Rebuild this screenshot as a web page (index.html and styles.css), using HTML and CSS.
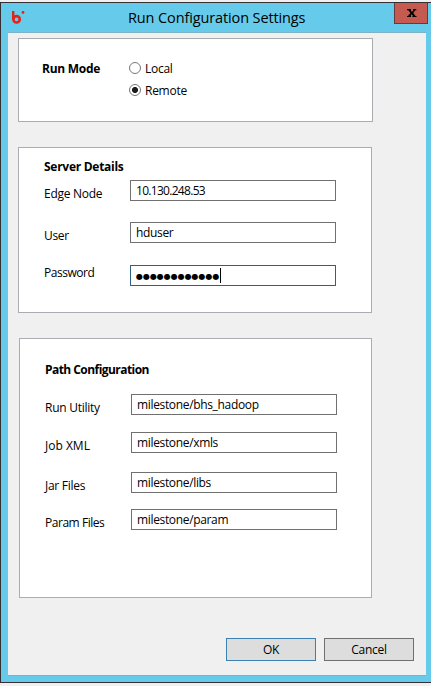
FILE: index.html
```html
<!DOCTYPE html>
<html lang="en">
<head>
<meta charset="utf-8">
<title>Run Configuration Settings</title>
<link rel="stylesheet" href="styles.css">
</head>
<body>
<div class="window">
  <header class="titlebar">
    <svg class="logo" width="14" height="14" viewBox="0 0 14 14">
      <path d="M2.2 1V9.5" fill="none" stroke="#e0251b" stroke-width="2.4"/>
      <circle cx="5.6" cy="9.3" r="3.2" fill="none" stroke="#e0251b" stroke-width="2.6"/>
      <circle cx="12" cy="2.4" r="1.4" fill="#e0251b"/>
    </svg>
    <h1 class="title">Run Configuration Settings</h1>
    <button class="close" aria-label="Close">
      <svg width="10" height="9" viewBox="0 0 10 9"><path d="M0 0H4V1.2H3.7L5 3L6.4 1.2H6V0H9.3V1.2H8.3L6.2 4L8.5 6.9H9.5V8.1H5.4V6.9H6L4.8 5.3L3.5 6.9H4V8.1H0V6.9H1L3.5 4L1.3 1.2H0Z" fill="#000"/></svg>
    </button>
  </header>
  <main class="content">
    <section class="panel mode">
      <h2 class="slight">Run Mode</h2>
      <div class="radios">
        <label class="radio"><i class="dot"></i><span class="slight">Local</span></label>
        <label class="radio"><i class="dot checked"></i><span class="slight">Remote</span></label>
      </div>
    </section>
    <section class="panel server">
      <h2 class="slight">Server Details</h2>
      <div class="row"><span class="label slight">Edge Node</span><div class="field tightest">10.130.248.53</div></div>
      <div class="row user"><span class="label snug">User</span><div class="field snug">hduser</div></div>
      <div class="row password"><span class="label tight">Password</span><div class="field focused"><span class="bullets">●●●●●●●●●●●●</span><i class="caret"></i></div></div>
    </section>
    <section class="panel paths">
      <h2 class="tighter">Path Configuration</h2>
      <div class="row"><span class="label slight">Run Utility</span><div class="field snug">milestone/bhs_hadoop</div></div>
      <div class="row job"><span class="label">Job XML</span><div class="field snug">milestone/xmls</div></div>
      <div class="row jar"><span class="label slight">Jar Files</span><div class="field snug">milestone/libs</div></div>
      <div class="row param"><span class="label tight">Param Files</span><div class="field snug">milestone/param</div></div>
    </section>
    <footer class="actions">
      <button class="btn default slight">OK</button>
      <button class="btn slight">Cancel</button>
    </footer>
  </main>
</div>
</body>
</html>
```

FILE: styles.css
```css
* { box-sizing: border-box; }
body {
  margin: 0;
  padding-top: 2px;
  background: #f0f0f0;
  color: #000;
  font: 12px/16px "Open Sans", "Noto Sans", sans-serif;
  overflow: hidden;
}
h1, h2 { margin: 0; font-size: 12px; line-height: 16px; white-space: nowrap; }
.slight { letter-spacing: -0.27px; }
.snug { letter-spacing: -0.34px; }
.tight { letter-spacing: -0.46px; }
.tighter { letter-spacing: -0.55px; }
.tightest { letter-spacing: -0.7px; }
.window {
  height: 681px;
  padding: 0 5px 6px 7px;
  border: solid #332f33;
  border-width: 1px 0 1px 1px;
  background: #66cbea;
}
.titlebar { display: flex; align-items: flex-start; height: 29px; }
.logo { margin: 7px 0 0 3px; }
.title {
  flex: 1;
  margin: 5px 0 0 103px;
  font-size: 14.5px;
  font-weight: 400;
  line-height: 20px;
  letter-spacing: -0.12px;
}
.close {
  display: flex;
  align-items: center;
  justify-content: center;
  width: 34px;
  height: 21px;
  margin-right: -2px;
  padding: 0 0 0 1px;
  border: 1px solid #66393c;
  border-top: 0;
  background: #c45a50;
}
.content {
  height: 644px;
  padding: 5px 12px 0 10px;
  border: solid #7fb1c7;
  border-width: 1px 0;
  background: #f0f0f0;
}
.panel { border: 1px solid #abacb2; background: #fff; }
.mode { display: flex; width: 355px; height: 84px; padding: 22px 0 0 23px; }
.mode h2 { width: 87px; }
.radios { display: grid; grid-auto-rows: 22px; }
.radio { display: flex; gap: 4px; }
.dot {
  width: 12px;
  height: 12px;
  margin-top: 1px;
  border: 1px solid #777;
  border-radius: 50%;
  background: #fff;
}
.checked { background: radial-gradient(circle, #1c1c1c 2.7px, #fff 3.3px); }
.server { width: 354px; height: 166px; margin-top: 25px; padding: 11px 0 0 25px; }
.paths { width: 353px; height: 260px; margin: 25px 0 0 1px; padding: 23px 0 0 25px; }
.row { display: flex; height: 21px; }
.server h2 { margin-bottom: 5px; }
.paths h2 { margin-bottom: 16px; }
.user { margin-top: 21px; }
.password { margin-top: 22px; }
.job { margin-top: 17px; }
.jar { margin-top: 19px; }
.param { margin-top: 16px; }
.label { width: 86px; padding-top: 6px; white-space: nowrap; }
.password .label { padding-top: 0; }
.field {
  display: flex;
  width: 206px;
  height: 21px;
  padding: 2px 0 0 5px;
  border: 1px solid #707070;
  background: #fff;
  white-space: nowrap;
}
.focused { padding-top: 1px; border-color: #2f6085; }
.bullets { width: 84px; font: 8px/19px "DejaVu Sans", sans-serif; letter-spacing: -0.03px; }
.caret { width: 1px; height: 15px; margin-top: 1px; background: #000; }
.actions { display: flex; justify-content: flex-end; gap: 8px; margin-top: 40px; }
.btn {
  width: 90px;
  height: 23px;
  padding: 0;
  border: 1px solid #707070;
  background: #ddd;
  color: #000;
  font: inherit;
}
.default { border-color: #3c7fb1; }
```
